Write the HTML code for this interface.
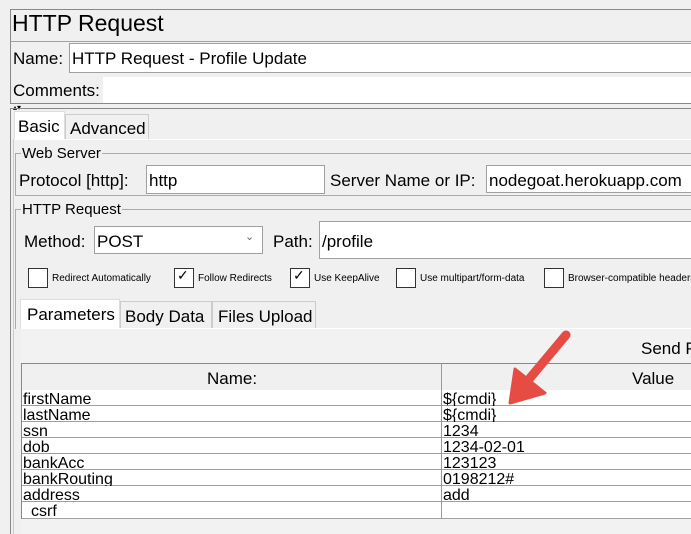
<!DOCTYPE html>
<html><head><meta charset="utf-8"><style>
*{box-sizing:border-box;margin:0;padding:0}
body{width:691px;height:534px;background:#f0f0f0;position:relative;overflow:hidden;font-family:"Liberation Sans",sans-serif;color:#000}
.a{position:absolute;white-space:nowrap}
.in{position:absolute;background:#fff;border:1px solid #a0a0a0}
.t{font-size:17px}
.cb{position:absolute;width:20px;height:20px;border:1px solid #333;background:#fff}
.cl{position:absolute;font-size:10px;top:273px;white-space:nowrap}
.row{position:absolute;left:21px;width:670px;height:16px;border-bottom:1px solid #a0a0a0;background:#fff;font-size:16px;line-height:16px}
.row span{position:absolute;top:2px}
</style></head><body>
<div class="a" style="left:10px;top:9px;width:681px;height:95px;border:1px solid #888;border-right:none"></div>
<div class="a" style="left:10px;top:41px;width:681px;border-top:1px solid #a0a0a0"></div>
<div class="a" style="left:12px;top:10px;font-size:23px">HTTP Request</div>
<div class="a t" style="left:13px;top:49px">Name:</div>
<div class="in" style="left:69px;top:43px;width:622px;height:30px;border-right:none"></div>
<div class="a t" style="left:72px;top:49px">HTTP Request - Profile Update</div>
<div class="a t" style="left:13px;top:81px">Comments:</div>
<div class="a" style="left:103px;top:77px;width:588px;height:26px;background:#fff"></div>
<div class="a" style="left:13px;top:103px;font-size:8px">▴▾</div>
<div class="a" style="left:10px;top:108px;width:681px;height:426px;border-left:1px solid #888;border-top:1px solid #888"></div>
<div class="a" style="left:13px;top:139px;width:678px;height:395px;border-left:1px solid #ccc;background:#f0f0f0"></div>
<div class="a" style="left:14px;top:111px;width:51px;height:29px;background:#fff;border:1px solid #ddd;border-bottom:none"></div>
<div class="a t" style="left:18px;top:117px">Basic</div>
<div class="a" style="left:65px;top:114px;width:84px;height:26px;border:1px solid #ccc;border-bottom:none"></div>
<div class="a t" style="left:70px;top:119px">Advanced</div>
<div class="a" style="left:14px;top:139px;width:677px;border-top:1px solid #fff"></div>
<div class="a" style="left:15px;top:153px;width:676px;height:43px;border:1px solid #aaa;border-right:none"></div>
<div class="a" style="left:21px;top:145px;font-size:15px;background:#f0f0f0;padding:0 1px">Web Server</div>
<div class="a t" style="left:19px;top:171px">Protocol [http]:</div>
<div class="in" style="left:146px;top:165px;width:179px;height:29px"></div>
<div class="a t" style="left:149px;top:171px">http</div>
<div class="a t" style="left:330px;top:171px">Server Name or IP:</div>
<div class="in" style="left:486px;top:165px;width:205px;height:28px;border-right:none"></div>
<div class="a t" style="left:489px;top:171px">nodegoat.herokuapp.com</div>
<div class="a" style="left:15px;top:209px;width:676px;height:120px;border-left:1px solid #aaa;border-top:1px solid #aaa"></div>
<div class="a" style="left:21px;top:201px;font-size:15px;background:#f0f0f0;padding:0 1px">HTTP Request</div>
<div class="a t" style="left:24px;top:232px">Method:</div>
<div class="in" style="left:94px;top:226px;width:169px;height:28px"></div>
<div class="a t" style="left:97px;top:232px">POST</div>
<div class="a" style="left:245px;top:230px;font-size:11px;color:#666">&#8964;</div>
<div class="a t" style="left:273px;top:232px">Path:</div>
<div class="in" style="left:319px;top:221px;width:372px;height:38px;border-right:none"></div>
<div class="a t" style="left:322px;top:232px">/profile</div>
<div class="cb" style="left:28px;top:268px"></div><div class="cl" style="left:52px">Redirect Automatically</div>
<div class="cb" style="left:174px;top:268px"></div><div class="a" style="left:177px;top:267px;font-size:14px">✓</div><div class="cl" style="left:198px">Follow Redirects</div>
<div class="cb" style="left:290px;top:268px"></div><div class="a" style="left:293px;top:267px;font-size:14px">✓</div><div class="cl" style="left:314px">Use KeepAlive</div>
<div class="cb" style="left:396px;top:268px"></div><div class="cl" style="left:420px">Use multipart/form-data</div>
<div class="cb" style="left:544px;top:268px"></div><div class="cl" style="left:568px">Browser-compatible headers</div>
<div class="a" style="left:20px;top:299px;width:100px;height:30px;background:#fff;border:1px solid #ddd;border-bottom:none"></div>
<div class="a t" style="left:27px;top:305px">Parameters</div>
<div class="a" style="left:120px;top:301px;width:92px;height:27px;border:1px solid #ccc;border-bottom:none"></div>
<div class="a t" style="left:125px;top:307px">Body Data</div>
<div class="a" style="left:212px;top:301px;width:104px;height:27px;border:1px solid #ccc;border-bottom:none"></div>
<div class="a t" style="left:218px;top:307px">Files Upload</div>
<div class="a" style="left:21px;top:328px;width:670px;height:206px;border-top:1px solid #fff;background:#f2f2f2"></div>
<div class="a t" style="left:641px;top:339px">Send P</div>
<div class="a" style="left:21px;top:363px;width:670px;height:28px;border:1px solid #888;border-right:none;background:#f0f0f0"></div>
<div class="a" style="left:441px;top:363px;height:28px;border-left:1px solid #999"></div>
<div class="a t" style="left:207px;top:369px">Name:</div>
<div class="a t" style="left:632px;top:369px">Value</div>
<div class="row" style="top:390px"><span style="left:2px">firstName</span><span style="left:422px">${cmdi}</span></div>
<div class="row" style="top:406px"><span style="left:2px">lastName</span><span style="left:422px">${cmdi}</span></div>
<div class="row" style="top:422px"><span style="left:2px">ssn</span><span style="left:422px">1234</span></div>
<div class="row" style="top:438px"><span style="left:2px">dob</span><span style="left:422px">1234-02-01</span></div>
<div class="row" style="top:454px"><span style="left:2px">bankAcc</span><span style="left:422px">123123</span></div>
<div class="row" style="top:470px"><span style="left:2px">bankRouting</span><span style="left:422px">0198212#</span></div>
<div class="row" style="top:486px"><span style="left:2px">address</span><span style="left:422px">add</span></div>
<div class="row" style="top:502px;height:17px"><span style="left:10px">csrf</span></div>
<div class="a" style="left:441px;top:390px;height:129px;border-left:1px solid #999"></div>
<div class="a" style="left:21px;top:390px;height:129px;border-left:1px solid #888"></div>
<svg class="a" style="left:0;top:0" width="691" height="534"><line x1="566" y1="335" x2="530" y2="378" stroke="#e64b44" stroke-width="9" stroke-linecap="round"/><polygon points="510,403 515,369 545,393" fill="#e64b44" stroke="#e64b44" stroke-width="3" stroke-linejoin="round"/></svg>
</body></html>
